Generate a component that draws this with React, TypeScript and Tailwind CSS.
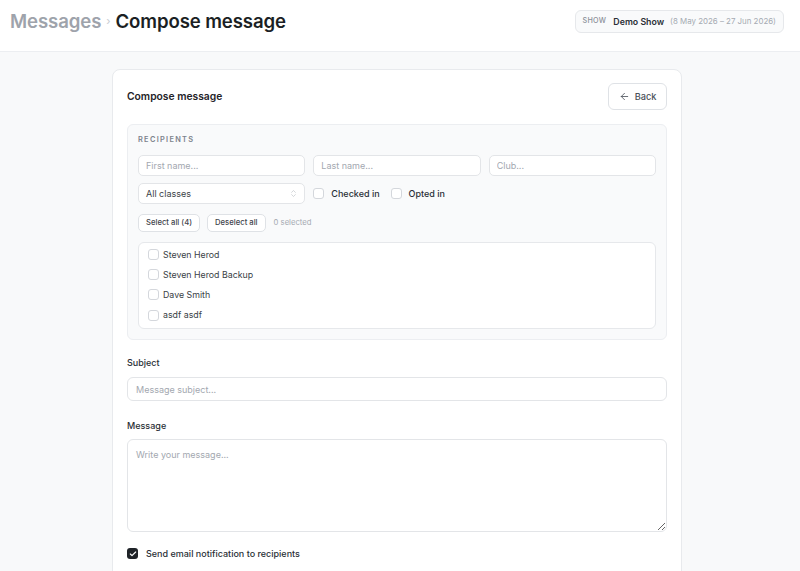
import React from "react";
import { ArrowLeft, ChevronsUpDown, Check } from "lucide-react";

const recipients = ["Steven Herod", "Steven Herod Backup", "Dave Smith", "asdf asdf"];

function Box({ checked = false }: { checked?: boolean }) {
  return checked ? (
    <span className="flex h-[11px] w-[11px] shrink-0 items-center justify-center rounded-[3px] bg-[#1f2328]">
      <Check className="h-[8px] w-[8px] text-white" strokeWidth={3.5} />
    </span>
  ) : (
    <span className="block h-[11px] w-[11px] shrink-0 rounded-[3px] border border-[#d4d7dc] bg-white" />
  );
}

function TextInput({ placeholder }: { placeholder: string }) {
  return (
    <input
      placeholder={placeholder}
      className="h-[21px] w-full rounded-[5px] border border-[#e3e5e8] bg-white px-[7px] text-[9px] text-gray-800 outline-none placeholder:text-[#a3a8b0]"
    />
  );
}

export default function App() {
  return (
    <div className="min-h-[571px] bg-[#f8f9fa] font-['Inter',sans-serif] text-[#1f2328]">
      <header className="flex h-[52px] items-start justify-between border-b border-[#eceef1] bg-white px-[10px] pt-[10px]">
        <h1 className="flex h-[23px] items-center text-[18.6px] font-semibold leading-none tracking-[-0.1px]">
          <span className="text-[#9ea3ab]">Messages</span>
          <span className="mx-[5px] text-[11px] font-normal text-[#c7cbd1]">›</span>
          <span className="text-[#1b1f24]">Compose message</span>
        </h1>
        <div className="mr-[6px] flex h-[23px] items-center rounded-[6px] border border-[#e6e8eb] bg-[#f9fafb] pl-[6px] pr-[7px]">
          <span className="text-[7.2px] font-medium tracking-[0.3px] text-[#8b9099]">SHOW</span>
          <span className="ml-[7px] text-[8.8px] font-semibold text-[#2a2f36]">Demo Show</span>
          <span className="ml-[6px] text-[7.9px] text-[#a5aab2]">(8 May 2026 – 27 Jun 2026)</span>
        </div>
      </header>

      <main className="pt-[17px]">
        <section className="ml-[112px] w-[570px] rounded-[8px] border border-[#e8eaed] bg-white px-[14px] pb-[20px] pt-[13px]">
          <div className="flex items-center justify-between">
            <h2 className="text-[10.3px] font-semibold text-[#1f2328]">Compose message</h2>
            <button className="flex h-[27px] w-[59px] items-center justify-center gap-[5px] rounded-[6px] border border-[#dfe2e6] bg-white text-[9.2px] font-medium text-[#4b515a]">
              <ArrowLeft className="h-[11px] w-[11px]" strokeWidth={1.8} />
              Back
            </button>
          </div>

          <div className="mt-[14px] rounded-[6px] border border-[#eceef1] bg-[#f9fafb] p-[10px]">
            <div className="text-[7.4px] font-semibold leading-[9px] tracking-[1.3px] text-[#7d838c]">RECIPIENTS</div>

            <div className="mt-[11px] grid grid-cols-3 gap-[8px]">
              <TextInput placeholder="First name..." />
              <TextInput placeholder="Last name..." />
              <TextInput placeholder="Club..." />
            </div>

            <div className="mt-[7px] grid grid-cols-3 gap-[8px]">
              <div className="flex h-[21px] items-center justify-between rounded-[5px] border border-[#e3e5e8] bg-white pl-[7px] pr-[6px]">
                <span className="text-[9px] text-[#3a3f46]">All classes</span>
                <ChevronsUpDown className="h-[9px] w-[9px] text-[#b9bdc3]" strokeWidth={1.6} />
              </div>
              <div className="col-span-2 flex items-center text-[9px] font-medium text-[#2a2f36]">
                <Box />
                <span className="ml-[7px]">Checked in</span>
                <span className="ml-[11px]"><Box /></span>
                <span className="ml-[7px]">Opted in</span>
              </div>
            </div>

            <div className="mt-[10px] flex items-center gap-[7px]">
              <button className="h-[18px] rounded-[5px] border border-[#dfe2e6] bg-white px-[7px] text-[7.7px] font-medium text-[#3f444c]">
                Select all (4)
              </button>
              <button className="h-[18px] rounded-[5px] border border-[#dfe2e6] bg-white px-[7px] text-[7.7px] font-medium text-[#3f444c]">
                Deselect all
              </button>
              <span className="ml-[1px] text-[7.7px] text-[#a5aab2]">0 selected</span>
            </div>

            <ul className="mt-[10px] rounded-[6px] border border-[#e6e8eb] bg-white px-[9px] pb-[3px] pt-[1px]">
              {recipients.map((name) => (
                <li key={name} className="flex h-[20.3px] items-center gap-[4px] text-[8.8px] text-[#3a3f46]">
                  <Box />
                  <span>{name}</span>
                </li>
              ))}
            </ul>
          </div>

          <label className="mt-[17px] block text-[9px] font-medium leading-[12px] text-[#2a2f36]">Subject</label>
          <input
            placeholder="Message subject..."
            className="mt-[8px] h-[24px] w-full rounded-[6px] border border-[#e3e5e8] bg-white px-[8px] text-[9px] outline-none placeholder:text-[#a3a8b0]"
          />

          <label className="mt-[19px] block text-[9px] font-medium leading-[12px] text-[#2a2f36]">Message</label>
          <textarea
            placeholder="Write your message..."
            className="mt-[7px] block h-[93px] w-full rounded-[6px] border border-[#e3e5e8] bg-white px-[8px] py-[8px] text-[9px] outline-none placeholder:text-[#a3a8b0]"
          />

          <div className="mt-[15px] flex items-center gap-[8px]">
            <Box checked />
            <span className="text-[9px] font-medium text-[#2a2f36]">Send email notification to recipients</span>
          </div>
        </section>
      </main>
    </div>
  );
}
